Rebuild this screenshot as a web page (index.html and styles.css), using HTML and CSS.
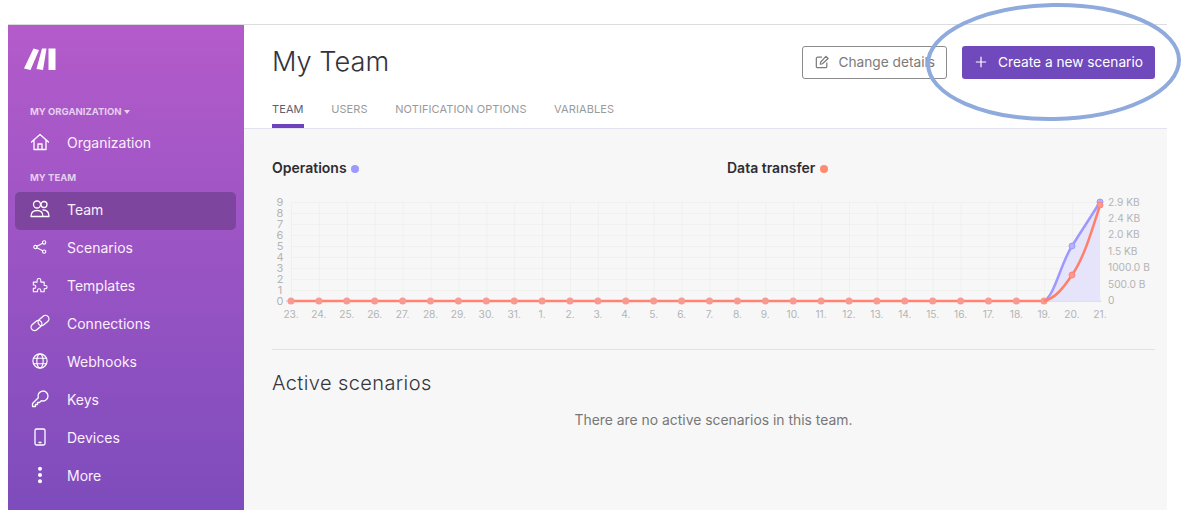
FILE: index.html
```html
<!DOCTYPE html>
<html lang="en">
<head>
<meta charset="utf-8">
<title>My Team</title>
<link rel="stylesheet" href="styles.css">
</head>
<body>
<div class="app">
  <aside class="sidebar">
    <svg class="logo" viewBox="0 0 32 24" width="32" height="24"><g fill="#fff"><polygon points="0,20.500 9.500,.5 15,2 6.500,22"/><polygon points="12.500,21 18,.5 22.500,.5 19,22"/><polygon points="24.500,.5 31.500,.5 31.500,22 24.500,22"/></g></svg>
    <div class="section section-org">MY ORGANIZATION <span class="caret"></span></div>
    <a class="item item-org">
      <svg class="ico" viewBox="0 0 20 20"><path d="M1.500 10 10 2.500l8.500 7.500M4 8v9.500h12V8M8 17.500v-5.500h4v5.500"/></svg>
      <span>Organization</span>
    </a>
    <div class="section section-team">MY TEAM</div>
    <nav class="nav">
      <a class="item active">
        <svg class="ico" viewBox="0 0 20 20"><circle cx="7" cy="5.500" r="3.500"/><circle cx="14" cy="5.500" r="3"/><path d="M1 17.500c0-4 2-6 6-6s6 2 6 6zM13 11c4 0 6 2 6 6.500h-5"/></svg>
        <span>Team</span>
      </a>
      <a class="item">
        <svg class="ico" viewBox="-2 -2 24 24"><circle cx="4.500" cy="10" r="2"/><circle cx="15" cy="4.500" r="2"/><circle cx="15" cy="15.500" r="2"/><path d="M6.300 9 13.200 5.400M6.300 11l6.900 3.600"/></svg>
        <span>Scenarios</span>
      </a>
      <a class="item">
        <svg class="ico" viewBox="-2 -2 24 24"><path d="M2 6.500h4.500V4.500a2.200 2.200 0 0 1 4.500 0v2h4v4h1.500a2 2 0 0 1 0 4H15v3.500h-4v-1.500a2 2 0 0 0-4 0v1.500H2v-4h1a2 2 0 0 0 0-4H2z"/></svg>
        <span>Templates</span>
      </a>
      <a class="item">
        <svg class="ico" viewBox="0 0 20 20"><rect x="0.500" y="9" width="12" height="7" rx="3.500" transform="rotate(-40 6.500 12.500)"/><rect x="7.500" y="4" width="12" height="7" rx="3.500" transform="rotate(-40 13.500 7.500)"/></svg>
        <span>Connections</span>
      </a>
      <a class="item">
        <svg class="ico" viewBox="-1 -1 22 22"><circle cx="10" cy="10" r="7.800"/><ellipse cx="10" cy="10" rx="3.500" ry="7.800"/><path d="M2.800 7h14.400M2.800 13h14.400"/></svg>
        <span>Webhooks</span>
      </a>
      <a class="item">
        <svg class="ico" viewBox="0 0 20 20"><path d="M8.300 8.700A5 5 0 1 1 11.300 11.700L9.500 13.500H7.500V15.500H5.500V17.500H2.500V14.500Z"/></svg>
        <span>Keys</span>
      </a>
      <a class="item">
        <svg class="ico" viewBox="0 0 20 20"><rect x="5" y="2" width="10" height="16" rx="1.500"/><path d="M9 15.500h2"/></svg>
        <span>Devices</span>
      </a>
      <a class="item">
        <svg class="ico ico-solid" viewBox="0 0 20 20"><circle cx="10" cy="3.800" r="2"/><circle cx="10" cy="10" r="2"/><circle cx="10" cy="16.200" r="2"/></svg>
        <span>More</span>
      </a>
    </nav>
  </aside>
  <main class="main">
    <header class="header">
      <div class="header-top">
        <h1 class="title">My Team</h1>
        <div class="actions">
          <button class="btn btn-outline">
            <svg class="btn-ico" viewBox="0 0 16 16"><path d="M13.500 8.500v4.500a1.500 1.500 0 0 1-1.500 1.500H3A1.500 1.500 0 0 1 1.500 13V4A1.500 1.500 0 0 1 3 2.500h5"/><path d="M6 10.500 6.500 8l6-6.500 2.500 2.500-6.500 6z"/></svg>
            Change details
          </button>
          <button class="btn btn-primary">
            <svg class="btn-ico plus" viewBox="0 0 14 14"><path d="M7 1v12M1 7h12"/></svg>
            Create a new scenario
          </button>
        </div>
      </div>
      <div class="tabs">
        <a class="tab tab-active">TEAM</a>
        <a class="tab">USERS</a>
        <a class="tab">NOTIFICATION OPTIONS</a>
        <a class="tab">VARIABLES</a>
      </div>
    </header>
    <section class="content">
      <div class="legend">
        <div class="legend-item">Operations <span class="dot dot-ops"></span></div>
        <div class="legend-item">Data transfer <span class="dot dot-data"></span></div>
      </div>
      <svg class="chart" viewBox="0 0 883 135" width="883" height="135">
        <defs>
          <pattern id="grid" x="19" y="12" width="27.900" height="11" patternUnits="userSpaceOnUse">
            <path d="M0 0v11M0 0h27.900" class="grid-line"/>
          </pattern>
          <marker id="m-red" viewBox="0 0 8 8" refX="4" refY="4" markerWidth="8" markerHeight="8" markerUnits="userSpaceOnUse"><circle cx="4" cy="4" r="3.500" fill="#f79a92"/></marker>
        </defs>
        <rect x="19" y="12" width="809" height="99" fill="url(#grid)"/>
        <path class="axis" d="M14 111h815"/>
        <path class="area" d="M772 111C783 105 788 75 800 56 810 40 820 25 828 12V111Z"/>
        <path class="line-ops" d="M772 111C783 105 788 75 800 56 810 40 820 25 828 12"/>
        <circle class="pt-ops" cx="800" cy="56" r="3"/>
        <circle class="pt-ops" cx="828" cy="12" r="3"/>
        <polyline class="line-base" marker-start="url(#m-red)" marker-mid="url(#m-red)" marker-end="url(#m-red)" points="19,111 46.900,111 74.800,111 102.700,111 130.600,111 158.500,111 186.400,111 214.300,111 242.200,111 270.100,111 298,111 325.900,111 353.800,111 381.700,111 409.600,111 437.500,111 465.400,111 493.300,111 521.200,111 549.100,111 577,111 604.900,111 632.800,111 660.700,111 688.600,111 716.500,111 744.400,111 772,111"/>
        <path class="line-data" d="M772 111C783 108 790 100 800 85 812 68 820 40 828 15"/>
        <circle class="pt-data" cx="800" cy="85" r="3"/>
        <circle class="pt-data" cx="828" cy="15" r="3"/>
        <g class="lbl lbl-y">
          <text x="8" y="15.500">9</text><text x="8" y="26.500">8</text><text x="8" y="37.500">7</text><text x="8" y="48.500">6</text><text x="8" y="59.500">5</text><text x="8" y="70.500">4</text><text x="8" y="81.500">3</text><text x="8" y="92.500">2</text><text x="8" y="103.500">1</text><text x="8" y="114.500">0</text>
        </g>
        <g class="lbl lbl-r">
          <text x="836" y="15.500">2.9 KB</text><text x="836" y="31.500">2.4 KB</text><text x="836" y="48">2.0 KB</text><text x="836" y="64.500">1.5 KB</text><text x="836" y="81">1000.0 B</text><text x="836" y="97.500">500.0 B</text><text x="836" y="114">0</text>
        </g>
        <g class="lbl lbl-x">
          <text x="19" y="128">23.</text><text x="46.900" y="128">24.</text><text x="74.800" y="128">25.</text><text x="102.700" y="128">26.</text><text x="130.600" y="128">27.</text><text x="158.500" y="128">28.</text><text x="186.400" y="128">29.</text><text x="214.300" y="128">30.</text><text x="242.200" y="128">31.</text><text x="270.100" y="128">1.</text><text x="298" y="128">2.</text><text x="325.900" y="128">3.</text><text x="353.800" y="128">4.</text><text x="381.700" y="128">5.</text><text x="409.600" y="128">6.</text><text x="437.500" y="128">7.</text><text x="465.400" y="128">8.</text><text x="493.300" y="128">9.</text><text x="521.200" y="128">10.</text><text x="549.100" y="128">11.</text><text x="577" y="128">12.</text><text x="604.900" y="128">13.</text><text x="632.800" y="128">14.</text><text x="660.700" y="128">15.</text><text x="688.600" y="128">16.</text><text x="716.500" y="128">17.</text><text x="744.400" y="128">18.</text><text x="772" y="128">19.</text><text x="800" y="128">20.</text><text x="828" y="128">21.</text>
        </g>
      </svg>
      <hr class="divider">
      <h2 class="subtitle">Active scenarios</h2>
      <p class="empty">There are no active scenarios in this team.</p>
    </section>
  </main>
</div>
<svg class="annotation" viewBox="0 0 260 124" width="260" height="124"><ellipse cx="129.500" cy="62" rx="125.500" ry="57" transform="rotate(-1 129.500 62)"/></svg>
</body>
</html>
```
FILE: styles.css
```css
* { box-sizing: border-box; }
html, body { margin: 0; padding: 0; }
body {
  background: #fff;
  font-family: Inter, "Liberation Sans", sans-serif;
  height: 518px;
  overflow: hidden;
  position: relative;
}
.app {
  display: flex;
  height: 486px;
  margin: 24px 33px 0 8px;
  border-top: 1px solid #dcdcdc;
}
.sidebar {
  width: 236px;
  flex: none;
  background: linear-gradient(180deg, #b45bcb 0%, #7e4cbc 100%);
  color: #fff;
  display: flex;
  flex-direction: column;
  padding: 0 8px 0 7px;
}
.logo { margin: 23px 0 0 9px; display: block; }
.section {
  font-size: 9.500px;
  font-weight: 700;
  color: rgba(255,255,255,.72);
  line-height: 12px;
  margin-left: 15px;
}
.section-org { margin-top: 34px; }
.section-team { margin-top: 9px; }
.caret {
  display: inline-block;
  border: 3.500px solid transparent;
  border-top: 4px solid rgba(255,255,255,.72);
  border-bottom: 0;
  vertical-align: 1.500px;
}
.nav { display: flex; flex-direction: column; margin-top: 8px; }
.item {
  height: 38px;
  display: flex;
  align-items: center;
  font-size: 14px;
  color: #fbeffd;
  border-radius: 5px;
  padding: 0 0 4px 15px;
  gap: 17px;
}
.item-org { margin-top: 7px; }
.active { background: #7e459f; }
.ico {
  width: 20px;
  height: 20px;
  flex: none;
  fill: none;
  stroke: #fff;
  stroke-width: 1.300;
  stroke-linejoin: round;
  stroke-linecap: round;
}
.ico-solid { fill: #fff; stroke: none; }
.main { flex: 1; display: flex; flex-direction: column; min-width: 0; }
.header {
  background: #fff;
  height: 104px;
  border-bottom: 1px solid #e4e2ee;
  padding: 0 12px 0 28px;
  display: flex;
  flex-direction: column;
}
.header-top {
  display: flex;
  justify-content: space-between;
  align-items: center;
  height: 76px;
}
.title {
  margin: 0 0 2px;
  font-size: 27.200px;
  font-weight: 300;
  color: #33333f;
}
.actions { display: flex; gap: 15px; margin-bottom: 1px; }
.btn {
  height: 33px;
  border-radius: 3px;
  font-family: inherit;
  font-size: 13.700px;
  display: flex;
  align-items: center;
  padding: 0;
}
.btn-outline {
  width: 145px;
  background: #fff;
  color: #7a7a7a;
  border: 1px solid #8a8a8a;
  padding-left: 12px;
  gap: 9.500px;
}
.btn-primary {
  width: 193px;
  background: #7049bd;
  color: #fff;
  border: 0;
  padding-left: 13px;
  gap: 9px;
}
.btn-ico { width: 14px; height: 14px; fill: none; stroke: #7a7a7a; stroke-width: 1.400; stroke-linejoin: round; flex: none; }
.plus { stroke: #fff; width: 12px; height: 12px; margin-right: 2px; }
.tabs { display: flex; gap: 27.500px; height: 28px; }
.tab {
  font-size: 11px;
  color: #9a9a9a;
  letter-spacing: .1px;
  height: 28px;
  line-height: 14px;
  padding-top: 2px;
}
.tab-active { color: #5d6070; border-bottom: 4px solid #6f43bd; }
.content {
  flex: 1;
  background: #f7f7f7;
  padding: 0 12px 0 28px;
}
.legend { display: flex; padding-top: 30px; height: 61px; }
.legend-item {
  width: 455px;
  flex: none;
  font-size: 14px;
  font-weight: 600;
  line-height: 18px;
  color: #2d2d33;
}
.dot { display: inline-block; width: 8px; height: 8px; border-radius: 50%; margin-left: 1px; }
.dot-ops { background: #9d99ff; }
.dot-data { background: #ff8a70; }
.chart { display: block; width: 883px; height: 135px; }
.grid-line { fill: none; stroke: #eeeeee; stroke-width: 1.500; }
.axis { stroke: #c9c9c9; stroke-width: 1; fill: none; }
.area { fill: #e6e4fa; }
.line-ops { fill: none; stroke: #9d99ff; stroke-width: 2.500; }
.line-data { fill: none; stroke: #ff7f6b; stroke-width: 2.500; }
.line-base { fill: none; stroke: #ff8273; stroke-width: 2.500; }
.pt-ops { fill: #b5b2fb; stroke: #9d99ff; stroke-width: 1; }
.pt-data { fill: #f79a92; stroke: #ff8273; stroke-width: 1; }
.lbl { font-size: 10.200px; fill: #b4b4b4; font-family: Inter, "Liberation Sans", sans-serif; }
.lbl-y text { text-anchor: middle; font-size: 11px; }
.lbl-x text { text-anchor: middle; }
.divider { border: 0; border-top: 1px solid #e2e2e2; margin: 24px 0 0; }
.subtitle {
  margin: 21px 0 0;
  font-size: 20px;
  font-weight: 300;
  line-height: 24px;
  color: #35353d;
  letter-spacing: .4px;
}
.empty {
  margin: 16px 0 0;
  text-align: center;
  font-size: 13.900px;
  line-height: 18px;
  color: #777;
}
.annotation {
  position: absolute;
  left: 924px;
  top: 0;
  fill: none;
  stroke: #8faadc;
  stroke-width: 4;
}
```
